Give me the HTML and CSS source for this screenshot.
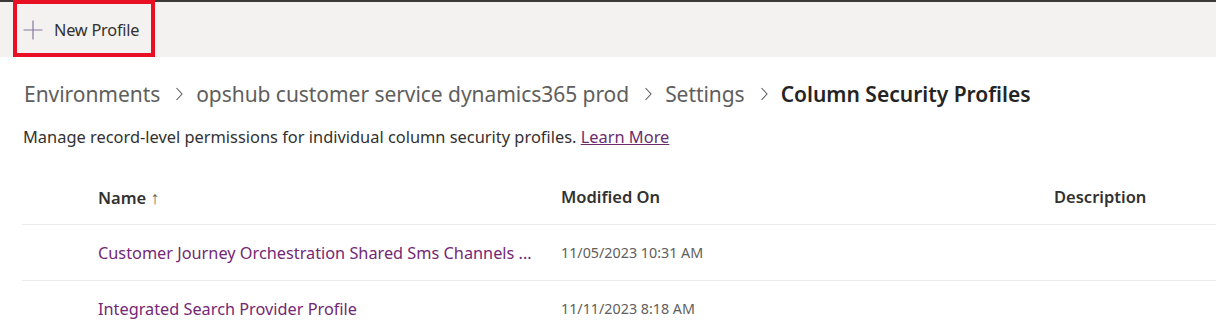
FILE: index.html
```html
<!DOCTYPE html>
<html>
<head>
<meta charset="utf-8">
<link rel="stylesheet" href="styles.css">
</head>
<body>
<div class="toolbar">
  <div class="cmd">
    <button class="cmd-btn">
      <svg class="plus" width="20" height="20" viewBox="0 0 20 20"><path d="M10 0.5V19.5M0.5 10H19.5" stroke="#8a76a0" stroke-width="1.2" fill="none"/></svg>
      <span>New Profile</span>
    </button>
    <div class="highlight"></div>
  </div>
</div>
<nav class="crumbs">
  <span class="crumb">Environments</span>
  <svg class="sep" width="8" height="14" viewBox="0 0 8 14"><path d="M1.5 1L7 7L1.5 13" stroke="#605e5c" stroke-width="1.1" fill="none"/></svg>
  <span class="crumb">opshub customer service dynamics365 prod</span>
  <svg class="sep" width="8" height="14" viewBox="0 0 8 14"><path d="M1.5 1L7 7L1.5 13" stroke="#605e5c" stroke-width="1.1" fill="none"/></svg>
  <span class="crumb">Settings</span>
  <svg class="sep" width="8" height="14" viewBox="0 0 8 14"><path d="M1.5 1L7 7L1.5 13" stroke="#605e5c" stroke-width="1.1" fill="none"/></svg>
  <span class="crumb current">Column Security Profiles</span>
</nav>
<p class="desc">Manage record-level permissions for individual column security profiles. <a class="learn">Learn More</a></p>
<div class="grid">
  <div class="row head">
    <div class="c-name">Name <span class="arrow">&#x2191;</span></div>
    <div class="c-mod">Modified On</div>
    <div class="c-desc">Description</div>
  </div>
  <div class="row">
    <div class="c-name"><a class="link">Customer Journey Orchestration Shared Sms Channels ...</a></div>
    <div class="c-mod date">11/05/2023 10:31 AM</div>
    <div class="c-desc"></div>
  </div>
  <div class="row">
    <div class="c-name"><a class="link">Integrated Search Provider Profile</a></div>
    <div class="c-mod date">11/11/2023 8:18 AM</div>
    <div class="c-desc"></div>
  </div>
</div>
</body>
</html>
```
FILE: styles.css
```css
html, body { margin: 0; padding: 0; background: #fff; }
body {
  font-family: "Noto Sans", "Open Sans", sans-serif;
  color: #323130;
  width: 1216px;
  height: 326px;
  overflow: hidden;
}
.toolbar {
  border-top: 2px solid #3b3a39;
  background: #f3f2f1;
  height: 55px;
  display: flex;
  align-items: stretch;
  padding-left: 13px;
}
.cmd { position: relative; display: flex; }
.cmd-btn {
  display: flex;
  align-items: center;
  gap: 11px;
  border: 0;
  background: transparent;
  padding: 0 13px 0 10px;
  font-family: inherit;
  font-size: 16.3px;
  color: #323130;
  letter-spacing: -0.2px;
}
.plus { display: block; }
.highlight {
  position: absolute;
  left: 0;
  top: -2px;
  width: 142px;
  height: 57px;
  box-sizing: border-box;
  border: 4.5px solid #e81123;
}
.crumbs {
  display: flex;
  align-items: center;
  margin: 0;
  padding: 0 0 0 24px;
  height: 73px;
  font-size: 21px;
  letter-spacing: -0.05px;
  color: #605e5c;
}
.sep {
  display: block;
  margin: 0 13px 0 15px;
}
.crumb.current { color: #252423; font-weight: 600; letter-spacing: 0; }
.desc {
  margin: 0;
  padding-left: 23px;
  height: 24px;
  line-height: 24px;
  margin-top: -5px;
  font-size: 16.4px;
  letter-spacing: 0;
  color: #323130;
}
.learn { color: #6b2d6b; text-decoration: underline; }
.grid { margin-top: 20px; margin-left: 22px; }
.row {
  display: grid;
  grid-template-columns: 539px 493px 1fr;
  height: 55px;
  align-items: center;
  border-bottom: 1px solid #edebe9;
}
.row > div { white-space: nowrap; overflow: hidden; }
.row .c-name { padding-left: 76px; }
.head { font-weight: 600; font-size: 16.5px; color: #323130; }
.arrow { font-weight: 400; color: #605e5c; font-size: 18px; }
.link { color: #742774; font-size: 16.3px; }
.date { color: #605e5c; font-size: 14.3px; letter-spacing: 0; }
```
